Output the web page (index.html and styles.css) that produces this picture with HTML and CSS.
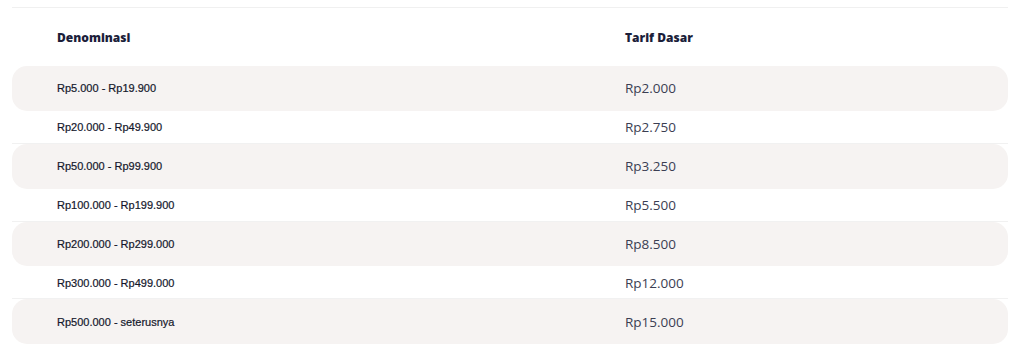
FILE: index.html
```html
<!DOCTYPE html>
<html lang="id">
<head>
<meta charset="utf-8">
<title>Tarif Dasar</title>
<link rel="stylesheet" href="styles.css">
</head>
<body>
<div class="table">
  <div class="row head">
    <div class="cell">Denominasi</div>
    <div class="cell">Tarif Dasar</div>
  </div>
  <div class="row shade">
    <div class="cell den">Rp5.000 - Rp19.900</div>
    <div class="cell fee">Rp2.000</div>
  </div>
  <div class="row plain">
    <div class="cell den">Rp20.000 - Rp49.900</div>
    <div class="cell fee">Rp2.750</div>
  </div>
  <div class="row shade">
    <div class="cell den">Rp50.000 - Rp99.900</div>
    <div class="cell fee">Rp3.250</div>
  </div>
  <div class="row plain">
    <div class="cell den">Rp100.000 - Rp199.900</div>
    <div class="cell fee">Rp5.500</div>
  </div>
  <div class="row shade">
    <div class="cell den">Rp200.000 - Rp299.000</div>
    <div class="cell fee">Rp8.500</div>
  </div>
  <div class="row plain">
    <div class="cell den">Rp300.000 - Rp499.000</div>
    <div class="cell fee">Rp12.000</div>
  </div>
  <div class="row shade">
    <div class="cell den">Rp500.000 - seterusnya</div>
    <div class="cell fee">Rp15.000</div>
  </div>
</div>
</body>
</html>
```

FILE: styles.css
```css
html, body {
  margin: 0;
  padding: 0;
  background: #ffffff;
}

.table {
  margin: 7px 0 0 12px;
  width: 996px;
  border-top: 1px solid #f0f0f0;
  display: flex;
  flex-direction: column;
}

.row {
  display: grid;
  grid-template-columns: 568px 1fr;
  align-items: center;
  box-sizing: border-box;
}

.cell {
  padding-left: 45px;
}

.head {
  height: 58px;
  font-family: "Open Sans", "Liberation Sans", sans-serif;
  font-weight: 800;
  font-size: 12px;
  color: #1b1e3a;
}

.shade {
  height: 44.75px;
  background: #f6f3f2;
  border-radius: 15px;
}

.plain {
  height: 33px;
  border-bottom: 1px solid #f1f1f1;
  padding-top: 1px;
}

.den {
  font-family: "Liberation Sans", Arial, sans-serif;
  font-size: 11px;
  color: #14172b;
  -webkit-text-stroke: 0.2px #14172b;
}

.fee {
  font-family: "Open Sans", "Liberation Sans", sans-serif;
  font-size: 13.5px;
  color: #3b3e52;
}
```
